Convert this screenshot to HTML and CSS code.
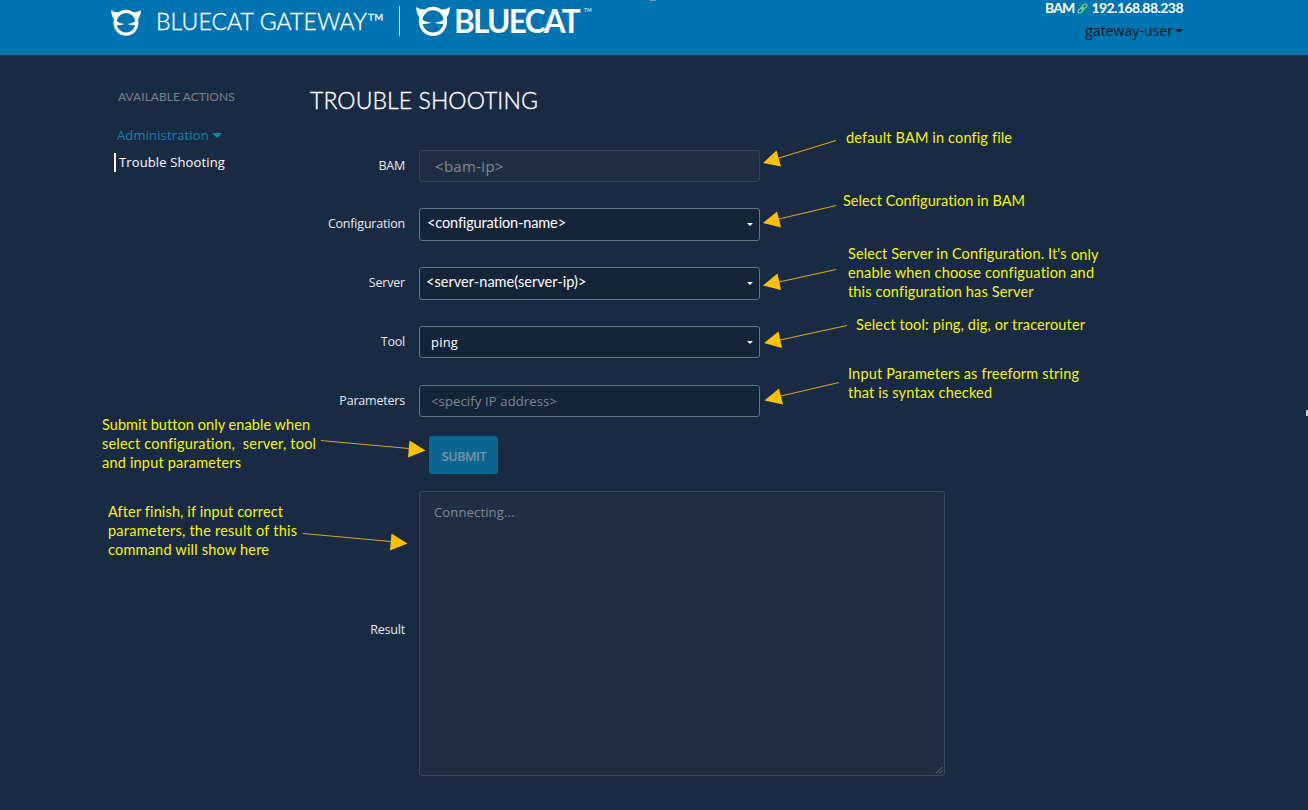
FILE: index.html
```html
<!DOCTYPE html>
<html lang="en">
<head>
<meta charset="utf-8">
<title>BlueCat Gateway</title>
<link rel="stylesheet" href="styles.css">
</head>
<body>
<svg class="defs" width="0" height="0" aria-hidden="true">
  <symbol id="cat" viewBox="0 0 34 30">
    <ellipse cx="17" cy="15.300" rx="12.400" ry="12.900" fill="none" stroke="#fff" stroke-width="3.500"/>
    <path fill="#fff" d="M0 1 Q4 3.800 9.200 3.800 L4 12 Q0.600 8.500 0 1Z M34 1 Q30 3.800 24.800 3.800 L30 12 Q33.400 8.500 34 1Z M4.500 12.500 Q8.500 15.800 15.300 16.700 Q11 18.400 4.500 18Z M29.500 12.500 Q25.500 15.800 18.700 16.700 Q23 18.400 29.500 18Z"/>
  </symbol>
</svg>
<header class="header">
  <div class="brand">
    <svg class="cat-small"><use href="#cat"/></svg>
    <span class="product">BLUECAT GATEWAY™</span>
    <span class="divider"></span>
    <svg class="cat-large"><use href="#cat"/></svg>
    <span class="company">BLUECAT</span><span class="tm">TM</span>
  </div>
  <span class="speck"></span>
  <div class="session">
    <div class="server-ip"><span>BAM</span>
      <svg class="link" viewBox="0 0 10 10"><g fill="none" stroke="#6fd66c" stroke-width="1.2"><rect x="-2.700" y="-1.500" width="5.400" height="3" rx="1.500" transform="translate(6.600 3.200) rotate(-45)"/><rect x="-2.700" y="-1.500" width="5.400" height="3" rx="1.500" transform="translate(3.400 6.800) rotate(-45)"/><path d="M3.800 6.200 6.200 3.800"/></g></svg>
      <span class="ip">192.168.88.238</span></div>
    <div class="user"><span>gateway-user</span><i class="caret"></i></div>
  </div>
</header>
<div class="content">
  <nav class="sidebar">
    <div class="side-title">AVAILABLE ACTIONS</div>
    <div class="side-group"><span>Administration</span><i class="caret"></i></div>
    <div class="side-item">Trouble Shooting</div>
  </nav>
  <main class="main">
    <h1 class="title">TROUBLE SHOOTING</h1>
    <div class="form">
      <label class="label l-bam">BAM</label><div class="field disabled"><span class="v-bam">&lt;bam-ip&gt;</span></div>
      <label class="label l-conf">Configuration</label><div class="field"><span class="note-font v-conf">&lt;configuration-name&gt;</span><i class="arrow"></i></div>
      <label class="label l-server">Server</label><div class="field"><span class="note-font v-server">&lt;server-name(server-ip)&gt;</span><i class="arrow"></i></div>
      <label class="label l-tool">Tool</label><div class="field"><span class="v-tool">ping</span><i class="arrow"></i></div>
      <label class="label l-param">Parameters</label><div class="field"><span class="v-param">&lt;specify IP address&gt;</span></div>
    </div>
    <div class="submit"><span>SUBMIT</span></div>
    <div class="result-row">
      <label class="label l-result">Result</label>
      <div class="result"><span>Connecting...</span>
        <svg class="grip" viewBox="0 0 8 8"><path d="M1 7.500 7.500 1M4.500 7.500 7.500 4.500" stroke="#687482" fill="none"/></svg></div>
    </div>
  </main>
</div>
<svg class="notes" width="1308" height="810" viewBox="0 0 1308 810">
  <g class="note-lines">
    <path d="M836 140.500 779 158"/><path d="M836 205.500 779 219"/><path d="M836 269.500 779 282"/>
    <path d="M847 325.500 780 340"/><path d="M839 382.500 781 396"/>
    <path d="M321 440.500 409 448.500"/><path d="M303 533.500 391 541.500"/>
  </g>
  <g class="note-heads">
    <path d="M763 163 776.500 150.500 781 166.500Z"/><path d="M763 223 777 211.500 781 227.500Z"/><path d="M763 285.500 777.500 273.500 781 290Z"/>
    <path d="M764 343 778.500 331.500 782 348Z"/><path d="M764.500 400.500 779 388.500 783 404.500Z"/>
    <path d="M425.500 450.500 409.500 440.500 408 457.500Z"/><path d="M407.500 543.500 391.500 533.500 390 550.500Z"/>
  </g>
  <g class="note-text">
    <text x="846" y="143" textLength="166">default BAM in config file</text>
    <text x="843" y="206" textLength="182">Select Configuration in BAM</text>
    <text x="848" y="259" textLength="218.500">Select Server in Configuration. It's</text>
    <text x="1071" y="260" textLength="27.500">only</text>
    <text x="848" y="278" textLength="246">enable when choose configuation and</text>
    <text x="848" y="297" textLength="185.500">this configuration has Server</text>
    <text x="856" y="330" textLength="229">Select tool: ping, dig, or tracerouter</text>
    <text x="848" y="379" textLength="231">Input Parameters as freeform string</text>
    <text x="848" y="398" textLength="144">that is syntax checked</text>
    <text x="102" y="430" textLength="208">Submit button only enable when</text>
    <text x="102" y="449" textLength="214" xml:space="preserve">select configuration,  server, tool</text>
    <text x="102" y="468" textLength="139">and input parameters</text>
    <text x="108" y="517" textLength="175">After finish, if input correct</text>
    <text x="108" y="536" textLength="189">parameters, the result of this</text>
    <text x="108" y="555" textLength="161">command will show here</text>
  </g>
  <rect x="1306" y="410" width="2" height="6" fill="#c9cdd3"/>
</svg>
</body>
</html>
```

FILE: styles.css
```css
* { box-sizing: border-box; }
body { margin: 0; width: 1308px; height: 810px; overflow: hidden; background: #192a43; color: #fff; font-family: "Open Sans", sans-serif; font-size: 13px; font-variant-ligatures: none; }
.defs { position: absolute; }
span { white-space: nowrap; }
.header { height: 55px; background: #0073b1; display: flex; align-items: flex-start; padding-left: 111px; position: relative; }
.brand { display: flex; align-items: flex-start; width: 539px; }
.cat-small { width: 30px; height: 27px; margin: 9px 15px 0 0; flex: none; }
.product { font: 300 23px/30px Lato, sans-serif; margin-top: 6px; width: 243px; letter-spacing: .08px; -webkit-text-stroke: .35px #fff; }
.divider { width: 1px; height: 30px; margin-top: 6px; background: #d6eaf5; margin-right: 16px; flex: none; }
.cat-large { width: 34px; height: 30px; margin-top: 6px; flex: none; }
.company { font: 700 31.500px/36px Lato, sans-serif; margin: 3px 0 0 4px; width: 131px; letter-spacing: -1.700px; }
.tm { font: 5px/6px Lato, sans-serif; margin-top: 7px; margin-left: -1px; }
.speck { width: 6px; height: 1px; background: #8b98a1; }
.session { width: 157px; margin-left: auto; margin-right: 125px; display: flex; flex-direction: column; align-items: flex-end; }
.server-ip { display: flex; align-items: center; font: 700 14px/16px Lato, sans-serif; letter-spacing: -.55px; }
.link { width: 11px; height: 11px; margin: 0 3px 0 3px; }
.server-ip span:first-child { letter-spacing: -.9px; }
.user { display: flex; align-items: center; color: #07151f; font-size: 14px; line-height: 20px; margin-top: 5px; }
.user span { letter-spacing: .05px; }
.caret { border: 4px solid transparent; border-top-color: currentColor; border-bottom: 0; }
.user .caret { margin-left: 2px; }
.content { display: flex; padding-left: 114px; }
.sidebar { width: 196px; padding-top: 34px; }
.side-title { font: 12px/16px Lato, sans-serif; color: #79828f; padding-left: 4px; letter-spacing: .05px; }
.side-group { display: flex; align-items: center; color: #0e86b0; padding-left: 3px; margin-top: 20px; line-height: 20px; letter-spacing: .14px; }
.side-group .caret { border-width: 5px 5px 0; margin-left: 3px; }
.side-item { border-left: 2px solid #fff; padding-left: 3px; line-height: 18px; height: 19px; margin-top: 8px; letter-spacing: .13px; }
.main { width: 636px; padding-top: 30px; }
.title { margin: 0; font: 300 23px/30px Lato, sans-serif; letter-spacing: .08px; -webkit-text-stroke: .35px #fff; }
.form { display: grid; grid-template-columns: 95px 341px; column-gap: 14px; grid-auto-rows: 32.500px; row-gap: 26.250px; margin-top: 34.500px; }
.label { text-align: right; line-height: 31px; font-size: 12.500px; color: #e6eaee; letter-spacing: -.2px; }
.l-conf, .l-server { line-height: 32px; }
.field { display: flex; align-items: center; border: 1px solid #687482; border-radius: 3px; background: #142439; line-height: 20px; padding-right: 7px; }
.disabled { background: #1f2e43; border-color: #34445b; }
.v-bam { font-size: 15px; padding-left: 15px; color: #7e8996; letter-spacing: .3px; }
.note-font { font-family: Lato, sans-serif; font-size: 14.500px; padding: 0 0 3px 7px; }
.v-conf { letter-spacing: -.13px; }
.v-server { padding-left: 6px; letter-spacing: .04px; }
.v-tool { padding-left: 11px; letter-spacing: .2px; }
.v-param { padding-left: 11px; color: #7e8790; letter-spacing: .15px; }
.arrow { margin-left: auto; margin-right: -1px; border: 3px solid transparent; border-top-color: #fff; border-bottom: 0; }
.submit { margin: 19px 0 0 119px; width: 69px; height: 38px; border-radius: 3px; background: #0c6692; display: flex; align-items: center; justify-content: center; color: #7f91a1; font-weight: 600; font-size: 12.500px; letter-spacing: -.4px; padding: 3px 0 0 1px; }
.result-row { display: flex; margin-top: 17px; gap: 14px; }
.result-row .label { width: 95px; line-height: 278px; }
.result { position: relative; width: 526px; height: 285px; border: 1px solid #3a495e; border-radius: 3px; background: #1f2e43; color: #7e8996; padding: 10px 14px; line-height: 20px; letter-spacing: .15px; }
.grip { position: absolute; right: 1px; bottom: 1px; width: 8px; height: 8px; }
.notes { position: absolute; left: 0; top: 0; }
.note-lines { stroke: #d9a514; stroke-width: 1.200; fill: none; }
.note-heads { fill: #ffc000; }
.note-text { font-family: Lato, sans-serif; font-size: 14.500px; fill: #f5f50a; }
```
